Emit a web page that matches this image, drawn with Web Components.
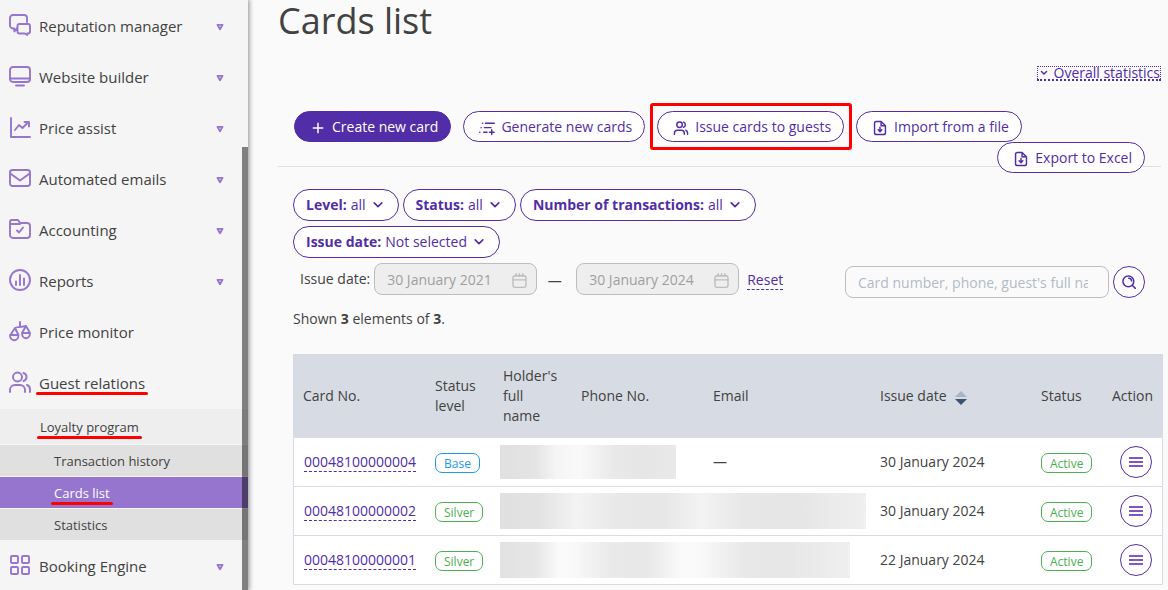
<!DOCTYPE html>
<html lang="en">
<head>
<meta charset="utf-8">
<title>Cards list</title>
<style>
  body { margin: 0; background: #fafafa; color: #424242; font: 14px/20px "Open Sans", "Noto Sans", sans-serif; }
</style>
</head>
<body>
<cards-app></cards-app>
<script>
const define = (name, html, setup) => {
  const tpl = document.createElement('template');
  tpl.innerHTML = html;
  customElements.define(name, class extends HTMLElement {
    constructor() {
      super();
      this.attachShadow({ mode: 'open' }).append(tpl.content.cloneNode(true));
    }
    connectedCallback() { if (setup) setup(this, this.shadowRoot); }
  });
};

const ICONS = {
  chat: '<path d="M7.500 14.500L5.500 17.500 5 14.500H4A3 3 0 0 1 1 11.500V4A3 3 0 0 1 4 1h11a3 3 0 0 1 3 3v4M10.500 10h8.500a2 2 0 0 1 2 2v5.500a2 2 0 0 1-2 2h-.8v1.500l-2.400-1.500h-5.300a2 2 0 0 1-2-2V12a2 2 0 0 1 2-2Z"/>',
  monitor: '<rect x="1" y="2" width="20" height="15" rx="3"/><path d="M1 13.500h20M7 20.500h8"/>',
  chart: '<path d="M2 2v19h19M6 14l4-5 3.500 3 6-6M15.500 6H20v4.500"/>',
  mail: '<rect x="1" y="3" width="20" height="16" rx="2.500"/><path d="M2 7l9 6.500L20 7"/>',
  folder: '<path d="M1 17V4a2 2 0 0 1 2-2h6l2 3h7a3 3 0 0 1 3 3v9a3 3 0 0 1-3 3H4a3 3 0 0 1-3-3ZM1 6h10M8 12.500l2 2 4-5"/>',
  reports: '<circle cx="11" cy="11" r="10"/><path d="M7 12.500V16M11 6v10M15 9.500V16"/>',
  scales: '<path d="M11 2v5M6 8c3-1.600 7-.6 11-2M6 8L1.500 15h8ZM17 6l-4 7h8ZM1 15c0 7 8.500 7 8.500 0ZM13 13c0 7 8 7 8 0Z"/>',
  guests: '<circle cx="8.500" cy="6" r="4.500"/><path d="M1 21v-2a5 5 0 0 1 5-5h5a5 5 0 0 1 5 5v2M14.500 2c4 1 4 7 0 8M18 14c2 .6 3 2 3 4.500V21"/>',
  people: '<circle cx="9" cy="6.500" r="3.800"/><path d="M2 19.500V18a4 4 0 0 1 4-4h5.500a4 4 0 0 1 4 4v1.500M14.500 3c3.200.8 3.200 6.200 0 7M17.500 14c1.800.5 2.500 1.800 2.500 3.500v2"/>',
  grid: '<rect x="2" y="2" width="7" height="7" rx="1"/><rect x="13" y="2" width="7" height="7" rx="1"/><rect x="2" y="13" width="7" height="7" rx="1"/><rect x="13" y="13" width="7" height="7" rx="1"/>',
  plus: '<path d="M11 4.500v13M4.500 11h13"/>',
  list: '<path d="M9 4.500h12M7.500 10.500h9M6.500 16.800h4.500M4.800 4.500h.2M2.800 10.500h.2M1 16.800h.2M17.500 13.500v6.500M14.300 16.800h6.500"/>',
  file: '<path d="M12.500 2H6a2.500 2.500 0 0 0-2.500 2.500v13A2.500 2.500 0 0 0 6 20h10a2.500 2.500 0 0 0 2.500-2.500V8ZM12.500 2v6h6M11 10v6M8.500 13.500l2.500 2.500 2.500-2.500"/>',
  down: '<path d="M4 7l7 7 7-7"/>',
  triangle: '<path d="M4 5h14l-7 12Z"/>',
  calendar: '<rect x="1.500" y="4" width="19" height="17" rx="3"/><path d="M1.500 10h19M6 1v4M11 1v4M16 1v4"/>',
  search: '<circle cx="10" cy="10" r="8.500"/><path d="M16 16l5 5M10.500 5c2.500 0 4.500 2 4.500 4.500"/>',
  menu: '<g stroke="#7e57c2" stroke-linecap="butt" stroke-width="3.100"><path d="M0 4.700h22M0 11h22M0 17.300h22"/></g>'
};

define('ui-icon', `
<style>
  :host { display: inline-block; flex: none; width: 22px; height: 22px; }
  svg { display: block; width: 100%; height: 100%; fill: none; stroke: currentColor; stroke-linecap: round; stroke-linejoin: round; }
</style>
<svg viewBox="0 0 22 22" aria-hidden="true"></svg>`, (el, root) => {
  const svg = root.querySelector('svg');
  svg.setAttribute('stroke-width', el.getAttribute('weight') || '1.9');
  svg.innerHTML = ICONS[el.getAttribute('name')] || '';
});

const drawIcon = (root, selector, name) => {
  root.querySelector(selector).shadowRoot.querySelector('svg').innerHTML = ICONS[name];
};

define('nav-item', `
<style>
  :host { display: block; }
  a { display: flex; align-items: center; height: 51px; padding: 0 24px 0 9px; box-sizing: border-box; color: inherit; text-decoration: none; font-size: 15px; }
  ui-icon { color: #9575cd; }
  .icon { margin: 0 8px 2px 0; }
  .label { position: relative; flex: 0 1 auto; }
  .arrow { width: 8px; height: 8px; margin: 3px 0 0 auto; }
  :host([leaf]) .arrow { display: none; }
  :host([marked]) .label::after { content: ""; position: absolute; left: -3px; right: -3px; bottom: -2px; height: 3px; border-radius: 2px; background: #f00; }
</style>
<a href="#"><ui-icon class="icon"></ui-icon><span class="label"><slot></slot></span><ui-icon class="arrow" name="triangle" weight="5"></ui-icon></a>`,
(el, root) => drawIcon(root, '.icon', el.getAttribute('icon')));

define('sub-item', `
<style>
  :host { display: block; font-size: 13px; border-top: 1px solid #f5f5f5; background: #e0e0e0; }
  :host([level="1"]) { background: #eee; }
  :host([current]) { background: #9575cd; color: #fff; }
  a { display: flex; align-items: center; height: 31px; padding-left: 54px; color: inherit; text-decoration: none; }
  :host([level="1"]) a { height: 35px; padding-left: 40px; }
  span { position: relative; }
  :host([marked]) span::after { content: ""; position: absolute; left: -3px; right: -3px; bottom: -2px; height: 3px; border-radius: 2px; background: #f00; }
</style>
<a href="#"><span><slot></slot></span></a>`);

define('side-bar', `
<style>
  :host { display: block; position: relative; flex: none; width: 248px; height: 100vh; background: #f5f5f5; box-shadow: 0 0 5px 1px rgba(0,0,0,.45); }
  nav { height: 100%; overflow: hidden; }
  .thumb { position: absolute; right: 0; top: 147px; bottom: 0; width: 6px; background: rgba(0,0,0,.48); }
</style>
<nav aria-label="Main">
  <nav-item icon="chat">Reputation manager</nav-item>
  <nav-item icon="monitor">Website builder</nav-item>
  <nav-item icon="chart">Price assist</nav-item>
  <nav-item icon="mail">Automated emails</nav-item>
  <nav-item icon="folder">Accounting</nav-item>
  <nav-item icon="reports">Reports</nav-item>
  <nav-item icon="scales" leaf>Price monitor</nav-item>
  <nav-item icon="guests" leaf marked>Guest relations</nav-item>
  <sub-item level="1" marked>Loyalty program</sub-item>
  <sub-item>Transaction history</sub-item>
  <sub-item current marked>Cards list</sub-item>
  <sub-item>Statistics</sub-item>
  <nav-item icon="grid">Booking Engine</nav-item>
</nav>
<div class="thumb"></div>`);

define('pill-button', `
<style>
  :host { display: block; position: relative; }
  button { display: flex; align-items: center; height: 31px; padding: 0 12px 0 15px; border: 1px solid #512da8; border-radius: 16px; background: #fff; color: #512da8; font: inherit; white-space: nowrap; }
  :host([primary]) button { background: #512da8; color: #fff; }
  ui-icon { width: 16px; height: 16px; margin: 2px 6px 0 0; }
  :host([marked])::after { content: ""; position: absolute; inset: -8px -8px -8px -7px; border: 3px solid #f00; border-radius: 3px; pointer-events: none; }
</style>
<button type="button"><ui-icon weight="2"></ui-icon><slot></slot></button>`,
(el, root) => drawIcon(root, 'ui-icon', el.getAttribute('icon')));

define('filter-pill', `
<style>
  :host { display: block; }
  button { display: flex; align-items: center; height: 32px; padding: 0 14px 0 12px; border: 1px solid #512da8; border-radius: 16px; background: #fff; color: #512da8; font: inherit; white-space: nowrap; }
  b { margin-right: 4px; font-weight: 700; }
  ui-icon { width: 12px; height: 12px; margin: 0 0 0 6px; }
</style>
<button type="button" aria-haspopup="listbox"><b><slot name="name"></slot></b><slot></slot><ui-icon name="down" weight="3"></ui-icon></button>`);

define('date-range', `
<style>
  :host { display: flex; align-items: center; height: 32px; padding: 0 0 3px 7px; }
  .field { position: relative; margin-left: 4px; }
  input { display: block; box-sizing: border-box; width: 163px; height: 32px; padding: 0 36px 0 12px; border: 1px solid #bdbdbd; border-radius: 8px; background: #eee; color: #9e9e9e; font: inherit; }
  ui-icon { position: absolute; right: 10px; top: 10px; width: 15px; height: 15px; color: #bdbdbd; }
  .dash { width: 35px; padding-top: 4px; text-align: center; }
  a { margin: 2px 0 0 8px; color: #512da8; text-decoration: none; border-bottom: 1px dashed #512da8; line-height: 18px; }
</style>
<label for="from">Issue date:</label>
<div class="field"><input id="from" disabled value="30 January 2021"><ui-icon name="calendar" weight="2"></ui-icon></div>
<span class="dash">—</span>
<div class="field"><input aria-label="Issue date to" disabled value="30 January 2024"><ui-icon name="calendar" weight="2"></ui-icon></div>
<a href="#">Reset</a>`);

define('round-button', `
<style>
  :host { display: inline-block; flex: none; }
  button { display: grid; place-items: center; box-sizing: border-box; width: 32px; height: 32px; padding: 0; border: 1px solid #512da8; border-radius: 50%; background: #fff; color: #512da8; }
  ui-icon { width: 14px; height: 14px; }
</style>
<button type="button"><ui-icon weight="2.400"></ui-icon></button>`, (el, root) => {
  root.querySelector('button').setAttribute('aria-label', el.getAttribute('label'));
  drawIcon(root, 'ui-icon', el.getAttribute('icon'));
});

define('search-box', `
<style>
  :host { display: flex; gap: 4px; flex: none; }
  input { box-sizing: border-box; width: 264px; height: 32px; padding: 0 20px 0 12px; border: 1px solid #bdbdbd; border-radius: 8px; background: #fafafa; font: inherit; }
  input::placeholder { color: #b0bac9; opacity: 1; }
</style>
<input type="text" aria-label="Search cards" placeholder="Card number, phone, guest's full name">
<round-button icon="search" label="Search"></round-button>`);

define('status-badge', `
<style>
  :host { display: inline-block; box-sizing: border-box; height: 20px; padding: 0 8px; border: 1px solid #4caf50; border-radius: 7px; color: #4caf50; font-size: 12px; line-height: 19px; vertical-align: middle; }
  :host([tone="base"]) { border-color: #2196f3; color: #2196f3; }
</style>
<slot></slot>`);

define('cards-table', `
<style>
  :host { display: block; }
  table { width: 100%; table-layout: fixed; border-collapse: separate; border-spacing: 0; background: #fff; outline: 1px solid #d7dbe3; outline-offset: -1px; }
  th { height: 84px; padding: 0 10px; box-sizing: border-box; background: #d7dbe3; font-weight: 400; text-align: left; }
  td { height: 49px; padding: 0 10px; box-sizing: border-box; border-bottom: 1px solid #d7dbe3; }
  .card { width: 132px; } .level { width: 68px; } .holder { width: 78px; } .phone { width: 132px; }
  .date { width: 161px; } .status { width: 71px; } .action { width: 61px; }
  td a { display: inline-block; margin-left: 1px; color: #512da8; text-decoration: none; border-bottom: 1px dashed #512da8; line-height: 18px; }
  th:last-child, td:last-child { text-align: right; }
  td:last-child { padding-right: 11px; line-height: 0; }
  .sort { display: inline-block; width: 12px; height: 14px; margin-left: 8px; vertical-align: -4px; }
  td.redacted { padding: 0 0 0 7px; }
  .blur { height: 36px; background: linear-gradient(90deg, #e0e0e0, #e3e3e3 11%, #f3f3f3 21%, #e8e8e8 32%, #e7e7e7 45%, #f3f3f3 55%, #e8e8e8 66%, #e5e5e5 80%, #efefef); }
  .one { width: 176px; height: 34px; background: linear-gradient(90deg, #e0e0e0, #e4e4e4 20%, #f5f5f5 32%, #f9f9f9 45%, #e9e9e9 65%, #e6e6e6 82%, #e9e9e9); }
  .two { width: 366px; }
  .three { width: 350px; background: linear-gradient(90deg, #e2e2e2, #e6e6e6 10%, #fafafa 17%, #f9f9f9 21%, #e9e9e9 32%, #e8e8e8 42%, #fafafa 52%, #f9f9f9 57%, #e8e8e8 70%, #e7e7e7 82%, #efefef); }
</style>
<table>
  <colgroup><col class="card"><col class="level"><col class="holder"><col class="phone"><col><col class="date"><col class="status"><col class="action"></colgroup>
  <thead><tr><th>Card No.</th><th>Status level</th><th>Holder's full name</th><th>Phone No.</th><th>Email</th>
    <th>Issue date<svg class="sort" viewBox="0 0 12 14" aria-hidden="true"><path d="M6 0l6 6H0Z" fill="#a9b3c3"/><path d="M6 14l6-6H0Z" fill="#3b5172"/></svg></th>
    <th>Status</th><th>Action</th></tr></thead>
  <tbody>
    <tr><td><a href="#">00048100000004</a></td><td><status-badge tone="base">Base</status-badge></td><td class="redacted" colspan="2"><div class="blur one"></div></td><td>—</td><td>30 January 2024</td><td><status-badge>Active</status-badge></td><td><round-button icon="menu" label="Actions"></round-button></td></tr>
    <tr><td><a href="#">00048100000002</a></td><td><status-badge>Silver</status-badge></td><td class="redacted" colspan="3"><div class="blur two"></div></td><td>30 January 2024</td><td><status-badge>Active</status-badge></td><td><round-button icon="menu" label="Actions"></round-button></td></tr>
    <tr><td><a href="#">00048100000001</a></td><td><status-badge>Silver</status-badge></td><td class="redacted" colspan="3"><div class="blur three"></div></td><td>22 January 2024</td><td><status-badge>Active</status-badge></td><td><round-button icon="menu" label="Actions"></round-button></td></tr>
  </tbody>
</table>`);

define('cards-app', `
<style>
  :host { display: flex; height: 100vh; overflow: hidden; }
  main { flex: 1; min-width: 0; padding: 0 5px 0 30px; }
  h1 { margin: 0; font-size: 36px; line-height: 42px; font-weight: 400; }
  .stats { display: flex; justify-content: flex-end; padding: 24px 2px 30px 0; }
  .stats a { display: flex; align-items: center; height: 12px; border: 1px dotted #512da8; border-bottom: 2px dotted #512da8; color: #512da8; text-decoration: none; }
  .stats ui-icon { width: 8px; height: 8px; margin: 0 6px 0 2px; }
  .toolbar { display: flex; flex-wrap: wrap; align-content: flex-start; column-gap: 12px; box-sizing: border-box; height: 56px; margin-right: 2px; padding: 0 16px; border-bottom: 1px solid #e0e0e0; }
  .toolbar .last { margin-left: auto; }
  .filters { display: flex; align-items: flex-end; padding: 22px 18px 0 15px; }
  .left { flex: 1; min-width: 0; }
  .pills { display: flex; flex-wrap: wrap; gap: 5px 4px; margin-bottom: 5px; }
  .shown { margin: 11px 0 25px 15px; }
  cards-table { margin-left: 15px; }
</style>
<side-bar></side-bar>
<main>
  <h1>Cards list</h1>
  <div class="stats"><a href="#"><ui-icon name="down" weight="4"></ui-icon>Overall statistics</a></div>
  <div class="toolbar">
    <pill-button primary icon="plus">Create new card</pill-button>
    <pill-button icon="list">Generate new cards</pill-button>
    <pill-button icon="people" marked>Issue cards to guests</pill-button>
    <pill-button icon="file">Import from a file</pill-button>
    <pill-button class="last" icon="file">Export to Excel</pill-button>
  </div>
  <div class="filters">
    <div class="left">
      <div class="pills">
        <filter-pill><span slot="name">Level:</span>all</filter-pill>
        <filter-pill><span slot="name">Status:</span>all</filter-pill>
        <filter-pill><span slot="name">Number of transactions:</span>all</filter-pill>
        <filter-pill><span slot="name">Issue date:</span>Not selected</filter-pill>
      </div>
      <date-range></date-range>
    </div>
    <search-box></search-box>
  </div>
  <p class="shown">Shown <b>3</b> elements of <b>3</b>.</p>
  <cards-table></cards-table>
</main>`);
</script>
</body>
</html>
